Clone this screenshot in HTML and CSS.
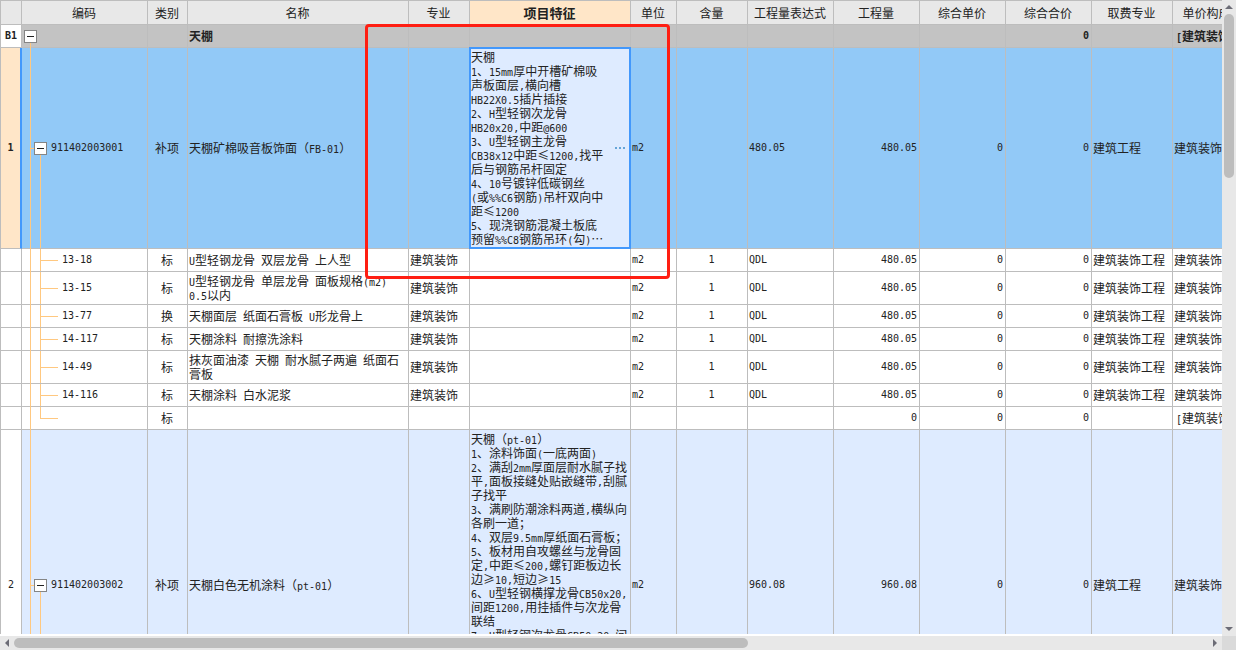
FILE: index.html
```html
<!DOCTYPE html>
<html lang="zh-CN">
<head>
<meta charset="utf-8">
<title>工程量清单</title>
<link rel="stylesheet" href="styles.css">
</head>
<body>
<div class="app">
<main class="pane">
<table class="grid">
<colgroup><col class="w-no"><col class="w-code"><col class="w-kind"><col class="w-name"><col class="w-major"><col class="w-feature"><col class="w-unit"><col class="w-content"><col class="w-num"><col class="w-num"><col class="w-num"><col class="w-num"><col class="w-fee"><col class="w-file"></colgroup>
<thead>
<tr><th></th><th>编码</th><th>类别</th><th>名称</th><th>专业</th><th class="current">项目特征</th><th>单位</th><th>含量</th><th>工程量表达式</th><th>工程量</th><th>综合单价</th><th>综合合价</th><th>取费专业</th><th>单价构成文件</th></tr>
</thead>
<tbody>
<tr class="section"><td class="no en">B1</td><td class="tree root"><div class="node"><button class="toggle" aria-label="折叠"></button></div></td><td></td><td>天棚</td><td></td><td></td><td></td><td></td><td></td><td></td><td></td><td class="r en">0</td><td></td><td class="bracket"><span class="en">[</span>建筑装饰工程<span class="en">]</span></td></tr>
<tr class="item selected"><td class="no en">1</td><td class="tree parent en"><div class="node child"><button class="toggle" aria-label="折叠"></button>911402003001</div></td><td class="c">补项</td><td>天棚矿棉吸音板饰面（<span class="en">FB-01</span>）</td><td></td><td class="active"><div class="editor"><div class="text">天棚<br><span class="en">1</span>、<span class="en">15mm</span>厚中开槽矿棉吸<br>声板面层<span class="en">,</span>横向槽<br><span class="en">HB22X0.5</span>插片插接<br><span class="en">2</span>、<span class="en">H</span>型轻钢次龙骨<br><span class="en">HB20x20,</span>中距<span class="en">@600</span><br><span class="en">3</span>、<span class="en">U</span>型轻钢主龙骨<br><span class="en">CB38x12</span>中距<span class="wide">≤</span><span class="en">1200,</span>找平<br>后与钢筋吊杆固定<br><span class="en">4</span>、<span class="en">10</span>号镀锌低碳钢丝<br><span class="en">(</span>或<span class="en">%%C6</span>钢筋<span class="en">)</span>吊杆双向中<br>距<span class="wide">≤</span><span class="en">1200</span><br><span class="en">5</span>、现浇钢筋混凝土板底<br>预留<span class="en">%%C8</span>钢筋吊环<span class="en">(</span>勾<span class="en">)</span><span class="wide">…</span></div><button class="more" aria-label="更多"><i></i><i></i><i></i></button></div></td><td class="en">m2</td><td></td><td class="en">480.05</td><td class="r en">480.05</td><td class="r en">0</td><td class="r en">0</td><td>建筑工程</td><td>建筑装饰工程</td></tr>
<tr><td></td><td class="tree leaf en"><div class="node">13-18</div></td><td class="c">标</td><td><span class="en">U</span>型轻钢龙骨&ensp;双层龙骨&ensp;上人型</td><td>建筑装饰</td><td></td><td class="en">m2</td><td class="c en">1</td><td class="en">QDL</td><td class="r en">480.05</td><td class="r en">0</td><td class="r en">0</td><td>建筑装饰工程</td><td>建筑装饰工程</td></tr>
<tr><td></td><td class="tree leaf en"><div class="node">13-15</div></td><td class="c">标</td><td><span class="en">U</span>型轻钢龙骨&ensp;单层龙骨&ensp;面板规格<span class="en">(m2)</span><br><span class="en">0.5</span>以内</td><td>建筑装饰</td><td></td><td class="en">m2</td><td class="c en">1</td><td class="en">QDL</td><td class="r en">480.05</td><td class="r en">0</td><td class="r en">0</td><td>建筑装饰工程</td><td>建筑装饰工程</td></tr>
<tr><td></td><td class="tree leaf en"><div class="node">13-77</div></td><td class="c">换</td><td>天棚面层&ensp;纸面石膏板&ensp;<span class="en">U</span>形龙骨上</td><td>建筑装饰</td><td></td><td class="en">m2</td><td class="c en">1</td><td class="en">QDL</td><td class="r en">480.05</td><td class="r en">0</td><td class="r en">0</td><td>建筑装饰工程</td><td>建筑装饰工程</td></tr>
<tr><td></td><td class="tree leaf en"><div class="node">14-117</div></td><td class="c">标</td><td>天棚涂料&ensp;耐擦洗涂料</td><td>建筑装饰</td><td></td><td class="en">m2</td><td class="c en">1</td><td class="en">QDL</td><td class="r en">480.05</td><td class="r en">0</td><td class="r en">0</td><td>建筑装饰工程</td><td>建筑装饰工程</td></tr>
<tr><td></td><td class="tree leaf en"><div class="node">14-49</div></td><td class="c">标</td><td>抹灰面油漆&ensp;天棚&ensp;耐水腻子两遍&ensp;纸面石<br>膏板</td><td>建筑装饰</td><td></td><td class="en">m2</td><td class="c en">1</td><td class="en">QDL</td><td class="r en">480.05</td><td class="r en">0</td><td class="r en">0</td><td>建筑装饰工程</td><td>建筑装饰工程</td></tr>
<tr><td></td><td class="tree leaf en"><div class="node">14-116</div></td><td class="c">标</td><td>天棚涂料&ensp;白水泥浆</td><td>建筑装饰</td><td></td><td class="en">m2</td><td class="c en">1</td><td class="en">QDL</td><td class="r en">480.05</td><td class="r en">0</td><td class="r en">0</td><td>建筑装饰工程</td><td>建筑装饰工程</td></tr>
<tr><td></td><td class="tree leaf last"><div class="node"></div></td><td class="c">标</td><td></td><td></td><td></td><td></td><td></td><td></td><td class="r en">0</td><td class="r en">0</td><td class="r en">0</td><td></td><td class="bracket"><span class="en">[</span>建筑装饰工程<span class="en">]</span></td></tr>
<tr class="item tall"><td class="no en">2</td><td class="tree parent en"><div class="node child"><button class="toggle" aria-label="折叠"></button>911402003002</div></td><td class="c">补项</td><td>天棚白色无机涂料（<span class="en">pt-01</span>）</td><td></td><td class="top">天棚（<span class="en">pt-01</span>）<br><span class="en">1</span>、涂料饰面<span class="en">(</span>一底两面<span class="en">)</span><br><span class="en">2</span>、满刮<span class="en">2mm</span>厚面层耐水腻子找<br>平<span class="en">,</span>面板接缝处贴嵌缝带<span class="en">,</span>刮腻<br>子找平<br><span class="en">3</span>、满刷防潮涂料两道<span class="en">,</span>横纵向<br>各刷一道；<br><span class="en">4</span>、双层<span class="en">9.5mm</span>厚纸面石膏板；<br><span class="en">5</span>、板材用自攻螺丝与龙骨固<br>定<span class="en">,</span>中距<span class="wide">≤</span><span class="en">200,</span>螺钉距板边长<br>边<span class="wide">≥</span><span class="en">10,</span>短边<span class="wide">≥</span><span class="en">15</span><br><span class="en">6</span>、<span class="en">U</span>型轻钢横撑龙骨<span class="en">CB50x20,</span><br>间距<span class="en">1200,</span>用挂插件与次龙骨<br>联结<br><span class="en">7</span>、<span class="en">U</span>型轻钢次龙骨<span class="en">CB50x20,</span>间</td><td class="en">m2</td><td></td><td class="en">960.08</td><td class="r en">960.08</td><td class="r en">0</td><td class="r en">0</td><td>建筑工程</td><td>建筑装饰工程</td></tr>
</tbody>
</table>
<div class="highlight"></div>
</main>
<div class="bar vertical">
<button class="arrow" aria-label="向上"><svg width="8" height="4" viewBox="0 0 8 4"><path d="M0 4L4 0L8 4Z"/></svg></button>
<div class="track"><div class="thumb"></div></div>
<button class="arrow" aria-label="向下"><svg width="8" height="4" viewBox="0 0 8 4"><path d="M0 0L4 4L8 0Z"/></svg></button>
</div>
<div class="bar horizontal">
<button class="arrow" aria-label="向左"><svg width="4" height="8" viewBox="0 0 4 8"><path d="M4 0L0 4L4 8Z"/></svg></button>
<div class="track"><div class="thumb"></div></div>
<button class="arrow" aria-label="向右"><svg width="4" height="8" viewBox="0 0 4 8"><path d="M0 0L4 4L0 8Z"/></svg></button>
</div>
<div class="corner"></div>
</div>
</body>
</html>
```
FILE: styles.css
```css
* { box-sizing: border-box; }

body {
  margin: 0;
  background: #fff;
  color: #222;
  font: 12px/14px "Noto Sans CJK SC", sans-serif;
}

button {
  margin: 0;
  padding: 0;
  border: 0;
  background: none;
  font: inherit;
}

.app {
  display: grid;
  grid-template-columns: minmax(0, 1fr) 14px;
  grid-template-rows: minmax(0, 1fr) 14px;
  height: 100vh;
}

.pane {
  position: relative;
  overflow: hidden;
  border-bottom: 2px solid #fff;
}

/* Grid */
.grid {
  width: 1266px;
  table-layout: fixed;
  border-collapse: separate;
  border-spacing: 0;
  white-space: nowrap;
}

.w-no { width: 22px; }
.w-code { width: 126px; }
.w-kind { width: 40px; }
.w-name { width: 221px; }
.w-major { width: 61px; }
.w-feature { width: 161px; }
.w-unit { width: 46px; }
.w-content { width: 71px; }
.w-num { width: 86px; }
.w-fee { width: 81px; }
.w-file { width: 93px; }

th, td {
  height: 23px;
  padding: 2px 2px 2px 1px;
  border: solid #bdbdbd;
  border-width: 0 1px 1px 0;
  text-align: left;
  vertical-align: middle;
}

th:first-child, td:first-child { border-left-width: 1px; }

th {
  height: 25px;
  border-top-width: 1px;
  background: #e8e8e8;
  font-weight: normal;
  text-align: center;
}

th.current {
  border-bottom-color: #4a98ee;
  background: #ffe6c8;
  font-size: 13px;
  font-weight: bold;
}

td.c { text-align: center; }
td.r { text-align: right; }
td.top { vertical-align: top; }
td.bracket { padding-left: 3px; }

td.no {
  padding: 0;
  background: #fff;
  text-align: center;
}

.section { background: #c3c3c3; font-weight: bold; }
.item { background: #deebff; }
.selected { background: #92c9f7; }
.tall td { height: 311px; }

.selected td.no {
  border-right: 2px solid #4298fc;
  background: #ffe6c8;
  font-weight: bold;
}

/* Half-width characters take a 6px cell, half of a Chinese one */
.en {
  font-family: "DejaVu Sans Mono", monospace;
  font-size: 10px;
  line-height: 10px;
}

.wide { line-height: 10px; }

/* Selected cell */
td.active {
  position: relative;
  background: #deebff;
}

td.active::after {
  content: "";
  position: absolute;
  inset: -1px;
  border: 2px solid #4298fc;
  pointer-events: none;
}

.editor { display: flex; justify-content: space-between; align-items: center; }
.text { min-width: 0; }

.more {
  display: flex;
  gap: 2px;
  padding: 4px 3px;
}

.more i { width: 2px; height: 2px; background: #65a5d8; }

/* Code tree */
.tree { position: relative; padding: 0; }

.node {
  display: flex;
  align-items: center;
  gap: 4px;
  min-height: 14px;
  padding-left: 2px;
}

.node.child { padding-left: 12px; }
.leaf .node { padding-left: 40px; }

.toggle {
  position: relative;
  z-index: 1;
  display: grid;
  place-items: center;
  width: 13px;
  height: 13px;
  border: 1px solid #858585;
  background: #fff;
}

.toggle::after {
  content: "";
  width: 7px;
  height: 1px;
  background: #222;
}

.tree::before {
  content: "";
  position: absolute;
  left: 8px;
  top: 0;
  bottom: -1px;
  width: 1px;
  background: #ffc880;
}

.root::before { top: 50%; }

.parent::after {
  content: "";
  position: absolute;
  left: 18px;
  top: 50%;
  bottom: 0;
  width: 1px;
  background: #ffc880;
}

.child::before {
  content: "";
  position: absolute;
  left: 8px;
  top: 50%;
  width: 5px;
  height: 1px;
  background: #ffc880;
}

.leaf::after {
  content: "";
  position: absolute;
  left: 18px;
  top: 0;
  width: 17px;
  height: 50%;
  border: solid #ffc880;
  border-width: 0 0 1px 1px;
}

.leaf:not(.last) .node::before {
  content: "";
  position: absolute;
  left: 18px;
  top: 50%;
  bottom: 0;
  width: 1px;
  background: #ffc880;
}

/* Annotation frame over the grid */
.highlight {
  position: absolute;
  left: 365px;
  top: 24px;
  width: 305px;
  height: 255px;
  border: 3px solid #ff1e12;
  border-radius: 4px;
  pointer-events: none;
}

/* Scroll bars */
.bar { display: flex; background: #e8e8e8; }
.vertical { flex-direction: column; }

.arrow {
  display: grid;
  place-items: center;
  flex: none;
  width: 14px;
  height: 14px;
}

.arrow svg { display: block; fill: #6c6c76; }
.track { flex: 1; padding: 2px 0; }
.vertical .track { padding: 0 2px; }
.thumb { border-radius: 5px; background: #bdbdbd; }
.vertical .thumb { height: 27%; }
.horizontal .thumb { width: 61.5%; height: 10px; }
.corner { background: #dadada; }
```
